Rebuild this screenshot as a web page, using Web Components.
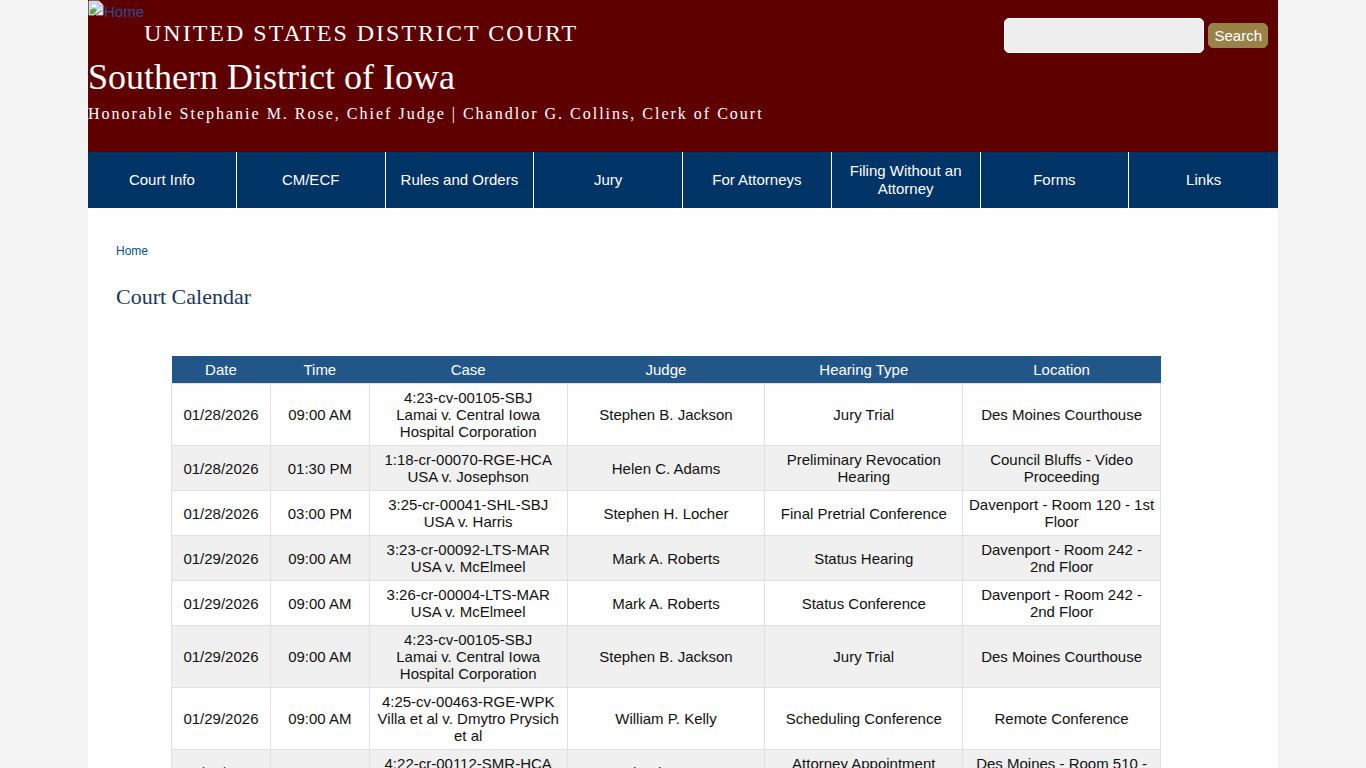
<!DOCTYPE html>
<html lang="en">
<head>
<meta charset="utf-8">
<title>Court Calendar | Southern District of Iowa</title>
<style>
  html { scrollbar-width: none; }
  body { margin: 0; background: #f3f3f3; color: #111; font: 15px/17px "Liberation Sans", Arial, sans-serif; }
</style>
</head>
<body>
<court-page>
  <court-banner slot="banner">
    <site-search slot="search"></site-search>
  </court-banner>
  <court-nav slot="nav"></court-nav>
  <page-heading></page-heading>
  <court-calendar></court-calendar>
</court-page>

<template id="court-page">
  <style>
    :host { display: block; max-width: 1190px; margin: 0 auto; background: #fefefe; }
    main { display: block; padding: 36px 62px 40px 28px; }
  </style>
  <slot name="banner"></slot>
  <slot name="nav"></slot>
  <main><slot></slot></main>
</template>

<template id="court-banner">
  <style>
    :host { display: block; background: #5f0000; color: #fff; font-family: "Liberation Serif", "Times New Roman", serif; }
    header { display: flex; justify-content: space-between; align-items: flex-start; min-height: 152px; }
    .top { display: flex; align-items: flex-start; }
    .logo { display: flex; width: 56px; white-space: nowrap; font: 15px/17px "Liberation Sans", Arial, sans-serif; color: #2b4a94; text-decoration: none; }
    .logo svg { flex: none; display: block; }
    .logo span { padding-top: 3px; }
    h1, h2, p { margin: 0; font-weight: 400; }
    p.court { padding-top: 19px; font-size: 24px; line-height: 28px; letter-spacing: 2px; }
    h1 { padding-top: 9px; font-size: 36px; line-height: 42px; }
    p.officers { padding-top: 6px; font-size: 16px; line-height: 20px; letter-spacing: 2px; }
  </style>
  <header>
    <div>
      <div class="top">
        <a class="logo" href="#">
          <svg width="16" height="16" viewBox="0 0 16 16" aria-hidden="true">
            <path d="M1 1h10l4 4v5l-3 1-3 2-3 2H1z" fill="#fff" stroke="#b5b5b5"/>
            <path d="M2 2h9v3h3v4l-4 1-4 4H2z" fill="#c3d6f8"/>
            <path d="M4 6c0-2 3-2 3-1 2 0 2 2 1 2H4z" fill="#fff"/>
            <path d="M2 14v-3c2-3 5-3 7-1l-3 4z" fill="#58a83c"/>
            <path d="M11 1v4h4z" fill="#fff" stroke="#b5b5b5"/>
            <path d="M15 10v5H8l3-2z" fill="#fff" stroke="#b5b5b5"/>
          </svg><span>Home</span>
        </a>
        <p class="court">UNITED STATES DISTRICT COURT</p>
      </div>
      <h1>Southern District of Iowa</h1>
      <p class="officers">Honorable Stephanie M. Rose, Chief Judge | Chandlor G. Collins, Clerk of Court</p>
    </div>
    <slot name="search"></slot>
  </header>
</template>

<template id="site-search">
  <style>
    :host { display: block; padding: 18px 10px 0 0; font: 15px/17px "Liberation Sans", Arial, sans-serif; }
    form { display: flex; align-items: center; gap: 4px; margin: 0; }
    input { box-sizing: border-box; width: 200px; height: 35px; padding: 4px 8px; border: 1px solid #fff; border-radius: 5px; background: #eee; font: inherit; }
    button { height: 25px; padding: 0 5px; border: 1px solid #998248; border-radius: 5px; background: #998248; color: #fff; font: inherit; }
  </style>
  <form role="search"><input type="search" aria-label="Search"><button type="button">Search</button></form>
</template>

<template id="court-nav">
  <style>
    :host { display: block; background: #003366; }
    nav { display: grid; grid-template-columns: repeat(8, 1fr); min-height: 56px; }
    a { display: flex; align-items: center; justify-content: center; padding: 10px; color: #fff; text-align: center; text-decoration: none; line-height: 18px; border-right: 1px solid #fff; }
    a:last-child { border-right: 0; }
  </style>
  <nav aria-label="Main menu"></nav>
</template>

<template id="page-heading">
  <style>
    :host { display: block; }
    nav { font-size: 12px; line-height: 14px; }
    a { color: #005282; text-decoration: none; }
    h2 { margin: 26px 0 46px; color: #1b365d; font: 22px/26px "Liberation Serif", "Times New Roman", serif; }
  </style>
  <nav aria-label="Breadcrumb"><a href="#">Home</a></nav>
  <h2>Court Calendar</h2>
</template>

<template id="court-calendar">
  <style>
    :host { display: block; }
    table { width: 90%; margin: 0 auto; table-layout: fixed; border-collapse: collapse; }
    th { background: #225689; color: #fff; font-weight: 400; padding: 5px; }
    td { padding: 5px; border: 1px solid #e0e0e0; text-align: center; vertical-align: middle; }
    tbody tr:nth-child(even) { background: #f0f0f0; }
    .narrow { width: 10%; }
    .wide { width: 20%; }
  </style>
  <table>
    <colgroup><col class="narrow"><col class="narrow"><col class="wide"><col class="wide"><col class="wide"><col class="wide"></colgroup>
    <thead><tr><th>Date</th><th>Time</th><th>Case</th><th>Judge</th><th>Hearing Type</th><th>Location</th></tr></thead>
    <tbody></tbody>
  </table>
</template>

<script>
  class TemplateElement extends HTMLElement {
    connectedCallback() {
      if (this.shadowRoot) return;
      const template = document.getElementById(this.localName);
      this.attachShadow({ mode: "open" }).append(template.content.cloneNode(true));
      this.fill(this.shadowRoot);
    }
    fill() {}
  }

  class CourtNav extends TemplateElement {
    fill(root) {
      const nav = root.querySelector("nav");
      for (const label of ["Court Info", "CM/ECF", "Rules and Orders", "Jury", "For Attorneys", "Filing Without an Attorney", "Forms", "Links"]) {
        const link = document.createElement("a");
        link.href = "#";
        link.textContent = label;
        nav.append(link);
      }
    }
  }

  const hearings = [
    ["01/28/2026", "09:00 AM", "4:23-cv-00105-SBJ", "Lamai v. Central Iowa Hospital Corporation", "Stephen B. Jackson", "Jury Trial", "Des Moines Courthouse"],
    ["01/28/2026", "01:30 PM", "1:18-cr-00070-RGE-HCA", "USA v. Josephson", "Helen C. Adams", "Preliminary Revocation Hearing", "Council Bluffs - Video Proceeding"],
    ["01/28/2026", "03:00 PM", "3:25-cr-00041-SHL-SBJ", "USA v. Harris", "Stephen H. Locher", "Final Pretrial Conference", "Davenport - Room 120 - 1st Floor"],
    ["01/29/2026", "09:00 AM", "3:23-cr-00092-LTS-MAR", "USA v. McElmeel", "Mark A. Roberts", "Status Hearing", "Davenport - Room 242 - 2nd Floor"],
    ["01/29/2026", "09:00 AM", "3:26-cr-00004-LTS-MAR", "USA v. McElmeel", "Mark A. Roberts", "Status Conference", "Davenport - Room 242 - 2nd Floor"],
    ["01/29/2026", "09:00 AM", "4:23-cv-00105-SBJ", "Lamai v. Central Iowa Hospital Corporation", "Stephen B. Jackson", "Jury Trial", "Des Moines Courthouse"],
    ["01/29/2026", "09:00 AM", "4:25-cv-00463-RGE-WPK", "Villa et al v. Dmytro Prysich et al", "William P. Kelly", "Scheduling Conference", "Remote Conference"],
    ["01/29/2026", "09:00 AM", "4:22-cr-00112-SMR-HCA", "USA v. Smith", "Stephanie M. Rose", "Attorney Appointment Hearing", "Des Moines - Room 510 - 5th Floor"]
  ];

  class CourtCalendar extends TemplateElement {
    fill(root) {
      const body = root.querySelector("tbody");
      for (const [date, time, number, title, judge, type, place] of hearings) {
        const row = body.insertRow();
        for (const text of [date, time, number, judge, type, place]) {
          row.insertCell().append(text);
        }
        row.cells[2].append(document.createElement("br"), title);
      }
    }
  }

  customElements.define("court-page", class extends TemplateElement {});
  customElements.define("court-banner", class extends TemplateElement {});
  customElements.define("site-search", class extends TemplateElement {});
  customElements.define("court-nav", CourtNav);
  customElements.define("page-heading", class extends TemplateElement {});
  customElements.define("court-calendar", CourtCalendar);
</script>
</body>
</html>
